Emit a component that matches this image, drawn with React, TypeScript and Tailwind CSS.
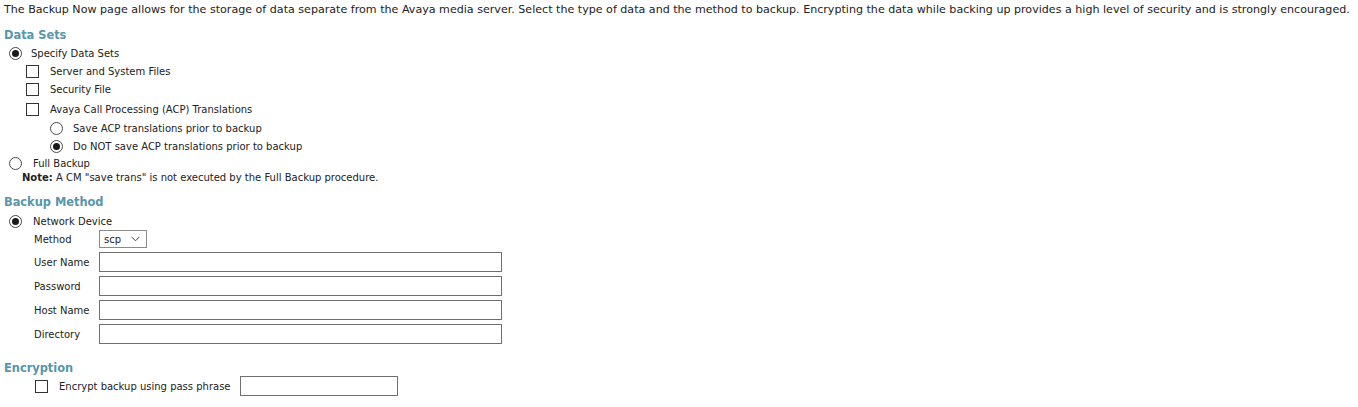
import React from "react";

const Radio = ({ checked }: { checked?: boolean }) => (
  <span className="flex h-[13px] w-[13px] shrink-0 items-center justify-center rounded-full border border-[#4a4a4a] bg-white">
    {checked && <span className="h-[7px] w-[7px] rounded-full bg-[#1a1a1a]" />}
  </span>
);

const Box = () => (
  <span className="block h-[13px] w-[13px] shrink-0 border border-[#333] bg-white" />
);

const Field = ({ label }: { label: string }) => (
  <div className="mt-1 flex h-5 items-center">
    <span className="w-[99px] shrink-0 pl-[34px] whitespace-nowrap">{label}</span>
    <div className="h-5 w-[403px] border border-[#707070] bg-white" />
  </div>
);

export default function App() {
  return (
    <div
      className="bg-white text-[10px] text-[#222]"
      style={{ fontFamily: '"DejaVu Sans", Verdana, sans-serif' }}
    >
      <p className="flex h-5 items-center whitespace-nowrap pl-1 text-[11.1px]">
        The Backup Now page allows for the storage of data separate from the Avaya media server. Select the type of data and the method to backup. Encrypting the data while backing up provides a high level of security and is strongly encouraged.
      </p>

      <h2 className="mt-1 flex h-5 items-center pl-1 pt-1 text-[11.4px] font-bold text-[#5796ab]">Data Sets</h2>
      <div className="flex h-[18px] items-center pl-[9px]">
        <Radio checked />
        <span className="ml-[9px]">Specify Data Sets</span>
      </div>
      <div className="flex h-[18px] items-center pl-[26px]">
        <Box />
        <span className="ml-[11px]">Server and System Files</span>
      </div>
      <div className="flex h-[18px] items-center pl-[26px]">
        <Box />
        <span className="ml-[11px]">Security File</span>
      </div>
      <div className="flex h-[22px] items-center pl-[26px]">
        <Box />
        <span className="ml-[11px]">Avaya Call Processing (ACP) Translations</span>
      </div>
      <div className="flex h-[17px] items-center pl-[50px]">
        <Radio />
        <span className="ml-[10px]">Save ACP translations prior to backup</span>
      </div>
      <div className="flex h-[18px] items-center pl-[50px]">
        <Radio checked />
        <span className="ml-[10px]">Do NOT save ACP translations prior to backup</span>
      </div>
      <div className="flex h-[17px] items-center pl-[9px]">
        <Radio />
        <span className="ml-[11px]">Full Backup</span>
      </div>
      <div className="flex h-[10px] items-center pl-[22px]">
        <span>
          <b>Note:</b> A CM "save trans" is not executed by the Full Backup procedure.
        </span>
      </div>

      <h2 className="mt-[9px] flex h-5 items-center pl-1 pt-1 text-[11.4px] font-bold text-[#5796ab]">Backup Method</h2>
      <div className="mt-[1px] flex h-[18px] items-center pl-[9px]">
        <Radio checked />
        <span className="ml-[11px]">Network Device</span>
      </div>
      <div className="flex h-[18px] items-center">
        <span className="w-[99px] shrink-0 pl-[34px]">Method</span>
        <div className="flex h-[18px] w-[48px] items-center justify-between border border-[#8a8a8a] bg-white pl-[4px] pr-[6px]">
          <span>scp</span>
          <svg width="9" height="6" viewBox="0 0 9 6" fill="none">
            <path d="M0.5 0.8 L4.5 4.8 L8.5 0.8" stroke="#444" strokeWidth="1" />
          </svg>
        </div>
      </div>
      <Field label="User Name" />
      <Field label="Password" />
      <Field label="Host Name" />
      <Field label="Directory" />

      <h2 className="mt-[13px] flex h-[19px] items-center pl-1 pt-1 text-[11.4px] font-bold text-[#5796ab]">Encryption</h2>
      <div className="flex h-5 items-center pl-[35px]">
        <Box />
        <span className="ml-[11px] w-[181px]">Encrypt backup using pass phrase</span>
        <div className="h-5 w-[158px] border border-[#707070] bg-white" />
      </div>
    </div>
  );
}
